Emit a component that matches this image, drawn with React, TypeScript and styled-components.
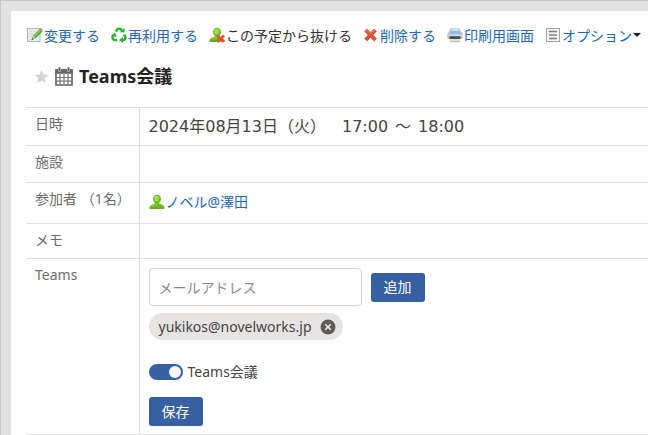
import React, { useState } from "react";
import styled, { createGlobalStyle, css } from "styled-components";

const uiFont = `"Noto Sans", "Noto Sans CJK JP", sans-serif`;
const wideFont = `"DejaVu Sans", "Noto Sans CJK JP", sans-serif`;
const kanaFont = `"Noto Sans CJK JP", sans-serif`;

const GlobalStyle = createGlobalStyle`
  *, *::before, *::after { box-sizing: border-box; }
  html, body, #root { height: 100%; }
  body {
    margin: 0;
    background: #e2e2e2;
    color: #333;
    font: 14px/20px ${uiFont};
    overflow: hidden;
  }
  button, input { font: inherit; color: inherit; }
`;

const Frame = styled.div`
  min-height: 100%;
  padding: 10px 0 0 10px;
  border: solid #c8c8c8;
  border-width: 1px 0 0 1px;
`;

const Panel = styled.main`
  min-height: calc(100vh - 11px);
  padding: 14px 0 0 15px;
  background: #fff;
`;

const Toolbar = styled.nav`
  display: flex;
  align-items: center;
  gap: 11px;
  height: 20px;
  padding-left: 1px;
  white-space: nowrap;
  font-family: ${kanaFont};
`;

const actionStyle = css<{ $plain?: boolean }>`
  display: inline-flex;
  flex: none;
  align-items: center;
  gap: 1px;
  height: 20px;
  padding: 0;
  border: 0;
  background: none;
  color: ${(p) => (p.$plain ? "#333" : "#2567b3")};
  text-decoration: none;
  cursor: pointer;
  svg { flex: none; }
`;

const ActionLink = styled.a<{ $plain?: boolean }>`${actionStyle}`;
const ActionButton = styled.button<{ $plain?: boolean }>`${actionStyle}`;

const Caret = styled.span`
  border: 4px solid transparent;
  border-top-color: #222;
  border-bottom: 0;
`;

const TitleRow = styled.div`
  display: flex;
  align-items: center;
  height: 28px;
  margin: 17px 0 17px 8px;
`;

const IconButton = styled.button`
  display: inline-flex;
  padding: 0;
  border: 0;
  background: none;
  cursor: pointer;
`;

const CalendarIcon = styled.svg`
  margin: 0 6px;
`;

const Title = styled.h1`
  margin: 0;
  color: #222;
  font-size: 18px;
  line-height: 24px;
`;

const Details = styled.table`
  width: 100%;
  border-collapse: collapse;
  border-bottom: 1px solid #e2e2e2;
`;

const Row = styled.tr<{ $height: number }>`
  height: ${(p) => p.$height}px;
  border-top: 1px solid #e2e2e2;
`;

const Label = styled.th`
  width: 113px;
  padding: 6px 0 4px 9px;
  border-right: 1px solid #dcdcdc;
  color: #6c6c6c;
  font-weight: 400;
  text-align: left;
  vertical-align: top;
  white-space: nowrap;
`;

const Value = styled.td`
  padding: 0 9px;
  vertical-align: middle;
`;

const DateText = styled.div`
  display: flex;
  gap: 16px;
  font: 16px/24px ${wideFont};
  color: #444;
`;

const TimeRange = styled.span`
  display: flex;
  gap: 7px;
`;

const TeamsForm = styled.form`
  display: flex;
  flex-direction: column;
  align-items: flex-start;
  padding: 9px 0 8px;
`;

const AddRow = styled.div`
  display: flex;
  align-items: center;
  gap: 9px;
`;

const MailInput = styled.input`
  width: 213px;
  height: 38px;
  padding: 0 9px;
  border: 1px solid #d4d4d4;
  border-radius: 4px;
  background: #fff;
  font-family: ${kanaFont};
  &::placeholder { color: #8c8c8c; opacity: 1; }
`;

const PrimaryButton = styled.button`
  height: 29px;
  padding: 0 13px;
  border: 0;
  border-radius: 3px;
  background: #3660a2;
  color: #fff;
  line-height: 20px;
  cursor: pointer;
`;

const Chip = styled.div`
  display: flex;
  align-items: center;
  gap: 8px;
  height: 27px;
  margin: 7px 0 20px;
  padding: 0 7px 0 10px;
  border-radius: 14px;
  background: #e7e5e4;
  color: #444;
`;

const SwitchLabel = styled.label`
  display: flex;
  align-items: center;
  gap: 5px;
  height: 24px;
  margin-bottom: 13px;
  color: #444;
  cursor: pointer;
`;

const Switch = styled.input`
  appearance: none;
  display: flex;
  align-items: center;
  width: 34px;
  height: 16px;
  margin: 0;
  padding: 0 2px;
  border-radius: 8px;
  background: #aaa;
  cursor: pointer;
  &::before {
    content: "";
    width: 12px;
    height: 12px;
    border-radius: 50%;
    background: #f7f7f7;
  }
  &:checked {
    justify-content: flex-end;
    background: #3660a2;
  }
`;

const EditIcon = () => (
  <svg width="16" height="16" viewBox="0 0 16 16" aria-hidden="true">
    <rect x="0.5" y="1.5" width="12.500" height="13" fill="#e9eff1" stroke="#adb5b8" />
    <path d="M2.500 4.500h6M2.500 7h4M2.500 9.500h3M2.500 12h2" stroke="#cdd5d8" />
    <path d="M5 12.500l1.200-4L12.700 2l2.800 2.500L9 11z" fill="#55a43b" />
    <path d="M7 9.500l6.500-6.500" stroke="#8bcb68" strokeWidth="1.200" />
    <path d="M12.300 2.300l1.400-1.300 2.200 2-1.300 1.500z" fill="#c98a50" />
    <path d="M4.700 12.800l1.300-4 2.700 2.500z" fill="#d9c295" />
    <path d="M4.500 13l.7-2 1.300 1.200z" fill="#333" />
  </svg>
);

const RecycleIcon = () => (
  <svg width="16" height="16" viewBox="0 0 16 16" fill="none" stroke="#2ab52e" strokeWidth="2.400" aria-hidden="true">
    <path d="M4.900 4.600L6 2.600Q6.500 1.700 7.500 1.700h1.300q1 0 1.500.9l.7 1.200" />
    <path d="M13 7.500l1.300 2.200q.5.900 0 1.800l-.4.700q-.5.900-1.500.9h-1.200" />
    <path d="M6.200 13.100H3.700q-1 0-1.500-.9l-.5-.8q-.5-.9 0-1.800l.9-1.500" />
    <g fill="#2ab52e" stroke="none">
      <path d="M8.600 5.200l4.800.3.300-4.500z" />
      <path d="M12 10v6L8 13z" />
      <path d="M0 8.300l4.200-2.600 1.500 4.500z" />
    </g>
  </svg>
);

const personShape = "M8 .8C5.500.8 4 2.500 4 4.900c0 1.700.8 3.100 1.900 4v.8C2.900 10.200.4 11.300.4 14.700h15.200c0-3.400-2.500-4.500-5.500-5v-.8c1.100-.9 1.900-2.300 1.900-4C12 2.500 10.500.8 8 .8z";

const PersonArt = () => (
  <>
    <path d={personShape} fill="#72ba20" />
    <ellipse cx="7.500" cy="4.400" rx="2.300" ry="2.700" fill="#a3dc55" />
    <path d="M2.500 12q2.500-1.700 5.500-1.300" stroke="#96d243" fill="none" />
    <path d="M.8 14.200h14.400" stroke="#599c17" />
  </>
);

const PersonIcon = () => (
  <svg width="16" height="16" viewBox="0 0 16 16" aria-hidden="true">
    <PersonArt />
  </svg>
);

const LeaveIcon = () => (
  <svg width="16" height="16" viewBox="0 0 16 16" aria-hidden="true">
    <PersonArt />
    <path d="M8.200 8.500l6.800 6.300M15 8.500l-6.800 6.300" stroke="#e8563a" strokeWidth="3" />
  </svg>
);

const DeleteIcon = () => (
  <svg width="16" height="16" viewBox="0 0 16 16" aria-hidden="true">
    <path d="M1.600 4.300l2.500-2.200 3.500 3.400 3.600-3.400 2.300 2.200L10 7.900l3.500 3.900-2.300 2.100-3.700-3.500-3.400 3.500-2.500-2.200L5.200 8z" fill="#d9523b" stroke="#c9503c" strokeWidth="0.700" />
    <path d="M3 4.200l1.200-.9 3.400 3.300L11.200 3.300l1 .8" stroke="#ef8b76" fill="none" />
  </svg>
);

const PrintIcon = () => (
  <svg width="16" height="16" viewBox="0 0 16 16" aria-hidden="true">
    <path d="M3.500 1h9l1.500 4.500H2z" fill="#d5d7d8" />
    <path d="M2.500 4Q.3 5.500.3 8v2.500q0 1.500 1.700 1.500h12q1.700 0 1.700-1.500V8q0-2.500-2.200-4z" fill="#bfc2c4" />
    <path d="M3.700 2h8.600l1 5.500H2.700z" fill="#8fbdeb" />
    <path d="M4.400 2h7.200l.3 2H4.100z" fill="#c8def3" />
    <path d="M1 8.200h14" stroke="#e5e6e7" />
    <rect x="2.300" y="9.300" width="11.400" height="2.700" rx="1" fill="#4a4d4f" />
    <path d="M3.300 12h9.400l.5 3H2.800z" fill="#e2e2e2" />
    <path d="M3 14.700h10" stroke="#b5b5b5" />
  </svg>
);

const OptionIcon = () => (
  <svg width="16" height="16" viewBox="0 0 16 16" fill="none" aria-hidden="true">
    <rect x="1.500" y="1.500" width="13" height="13" fill="#f4f4f4" stroke="#a3a3a3" />
    <path d="M4 4.500h8M4 8h8M4 11.500h8" stroke="#7d7d7d" strokeWidth="1.300" />
  </svg>
);

const StarIcon = () => (
  <svg width="15" height="15" viewBox="0 0 15 15" aria-hidden="true">
    <path d="M7.500.8l2 4.600 4.900.5-3.700 3.300 1.100 4.900-4.300-2.600-4.300 2.600 1.100-4.900L.6 5.900l4.900-.5z" fill="#d4d4d4" />
  </svg>
);

const Calendar = () => (
  <CalendarIcon width="18" height="19" viewBox="0 0 18 19" aria-hidden="true">
    <path d="M1 3h16v15H1z" fill="#fff" stroke="#5f5f5f" strokeWidth="1.600" />
    <path d="M.3 2.200h17.400v4.600H.3z" fill="#666" />
    <path d="M4.500.5v4M13.500.5v4" stroke="#d8d8d8" strokeWidth="2.800" />
    <path d="M4.500.5v3.500M13.500.5v3.500" stroke="#555" strokeWidth="1.600" />
    <path d="M1 10.500h16M1 14.200h16M5 7v11M9 7v11M13 7v11" stroke="#777" strokeWidth="1.200" />
  </CalendarIcon>
);

const RemoveIcon = () => (
  <svg width="16" height="16" viewBox="0 0 16 16" aria-hidden="true">
    <circle cx="8" cy="8" r="7.500" fill="#5d5a58" />
    <path d="M5.200 5.200l5.600 5.600M10.800 5.200l-5.600 5.600" stroke="#f0eeee" strokeWidth="1.600" />
  </svg>
);

export default function App() {
  const [mail, setMail] = useState("");
  const [members, setMembers] = useState(["yukikos@novelworks.jp"]);
  const [online, setOnline] = useState(true);

  const addMember = () => {
    if (mail && !members.includes(mail)) setMembers([...members, mail]);
    setMail("");
  };

  return (
    <>
      <GlobalStyle />
      <Frame>
        <Panel>
          <Toolbar>
            <ActionLink href="#edit"><EditIcon />変更する</ActionLink>
            <ActionLink href="#reuse"><RecycleIcon />再利用する</ActionLink>
            <ActionLink href="#leave" $plain><LeaveIcon />この予定から抜ける</ActionLink>
            <ActionLink href="#delete"><DeleteIcon />削除する</ActionLink>
            <ActionLink href="#print"><PrintIcon />印刷用画面</ActionLink>
            <ActionButton type="button" aria-haspopup="menu">
              <OptionIcon />オプション<Caret />
            </ActionButton>
          </Toolbar>
          <TitleRow>
            <IconButton type="button" aria-label="お気に入り"><StarIcon /></IconButton>
            <Calendar />
            <Title>Teams会議</Title>
          </TitleRow>
          <Details>
            <tbody>
              <Row $height={38}>
                <Label scope="row">日時</Label>
                <Value>
                  <DateText>
                    <span>2024年08月13日（火）</span>
                    <TimeRange>
                      <span>17:00</span>
                      <span>～</span>
                      <span>18:00</span>
                    </TimeRange>
                  </DateText>
                </Value>
              </Row>
              <Row $height={37}>
                <Label scope="row">施設</Label>
                <Value />
              </Row>
              <Row $height={41}>
                <Label scope="row">参加者 （1名）</Label>
                <Value>
                  <ActionLink href="#user"><PersonIcon />ノベル@澤田</ActionLink>
                </Value>
              </Row>
              <Row $height={35}>
                <Label scope="row">メモ</Label>
                <Value />
              </Row>
              <Row $height={176}>
                <Label scope="row">Teams</Label>
                <Value>
                  <TeamsForm onSubmit={(e) => e.preventDefault()}>
                    <AddRow>
                      <MailInput
                        type="email"
                        aria-label="メールアドレス"
                        placeholder="メールアドレス"
                        value={mail}
                        onChange={(e) => setMail(e.target.value)}
                      />
                      <PrimaryButton type="button" onClick={addMember}>追加</PrimaryButton>
                    </AddRow>
                    {members.map((m) => (
                      <Chip key={m}>
                        {m}
                        <IconButton
                          type="button"
                          aria-label="削除"
                          onClick={() => setMembers(members.filter((x) => x !== m))}
                        >
                          <RemoveIcon />
                        </IconButton>
                      </Chip>
                    ))}
                    <SwitchLabel>
                      <Switch
                        type="checkbox"
                        role="switch"
                        checked={online}
                        onChange={(e) => setOnline(e.target.checked)}
                      />
                      Teams会議
                    </SwitchLabel>
                    <PrimaryButton type="submit">保存</PrimaryButton>
                  </TeamsForm>
                </Value>
              </Row>
            </tbody>
          </Details>
        </Panel>
      </Frame>
    </>
  );
}
